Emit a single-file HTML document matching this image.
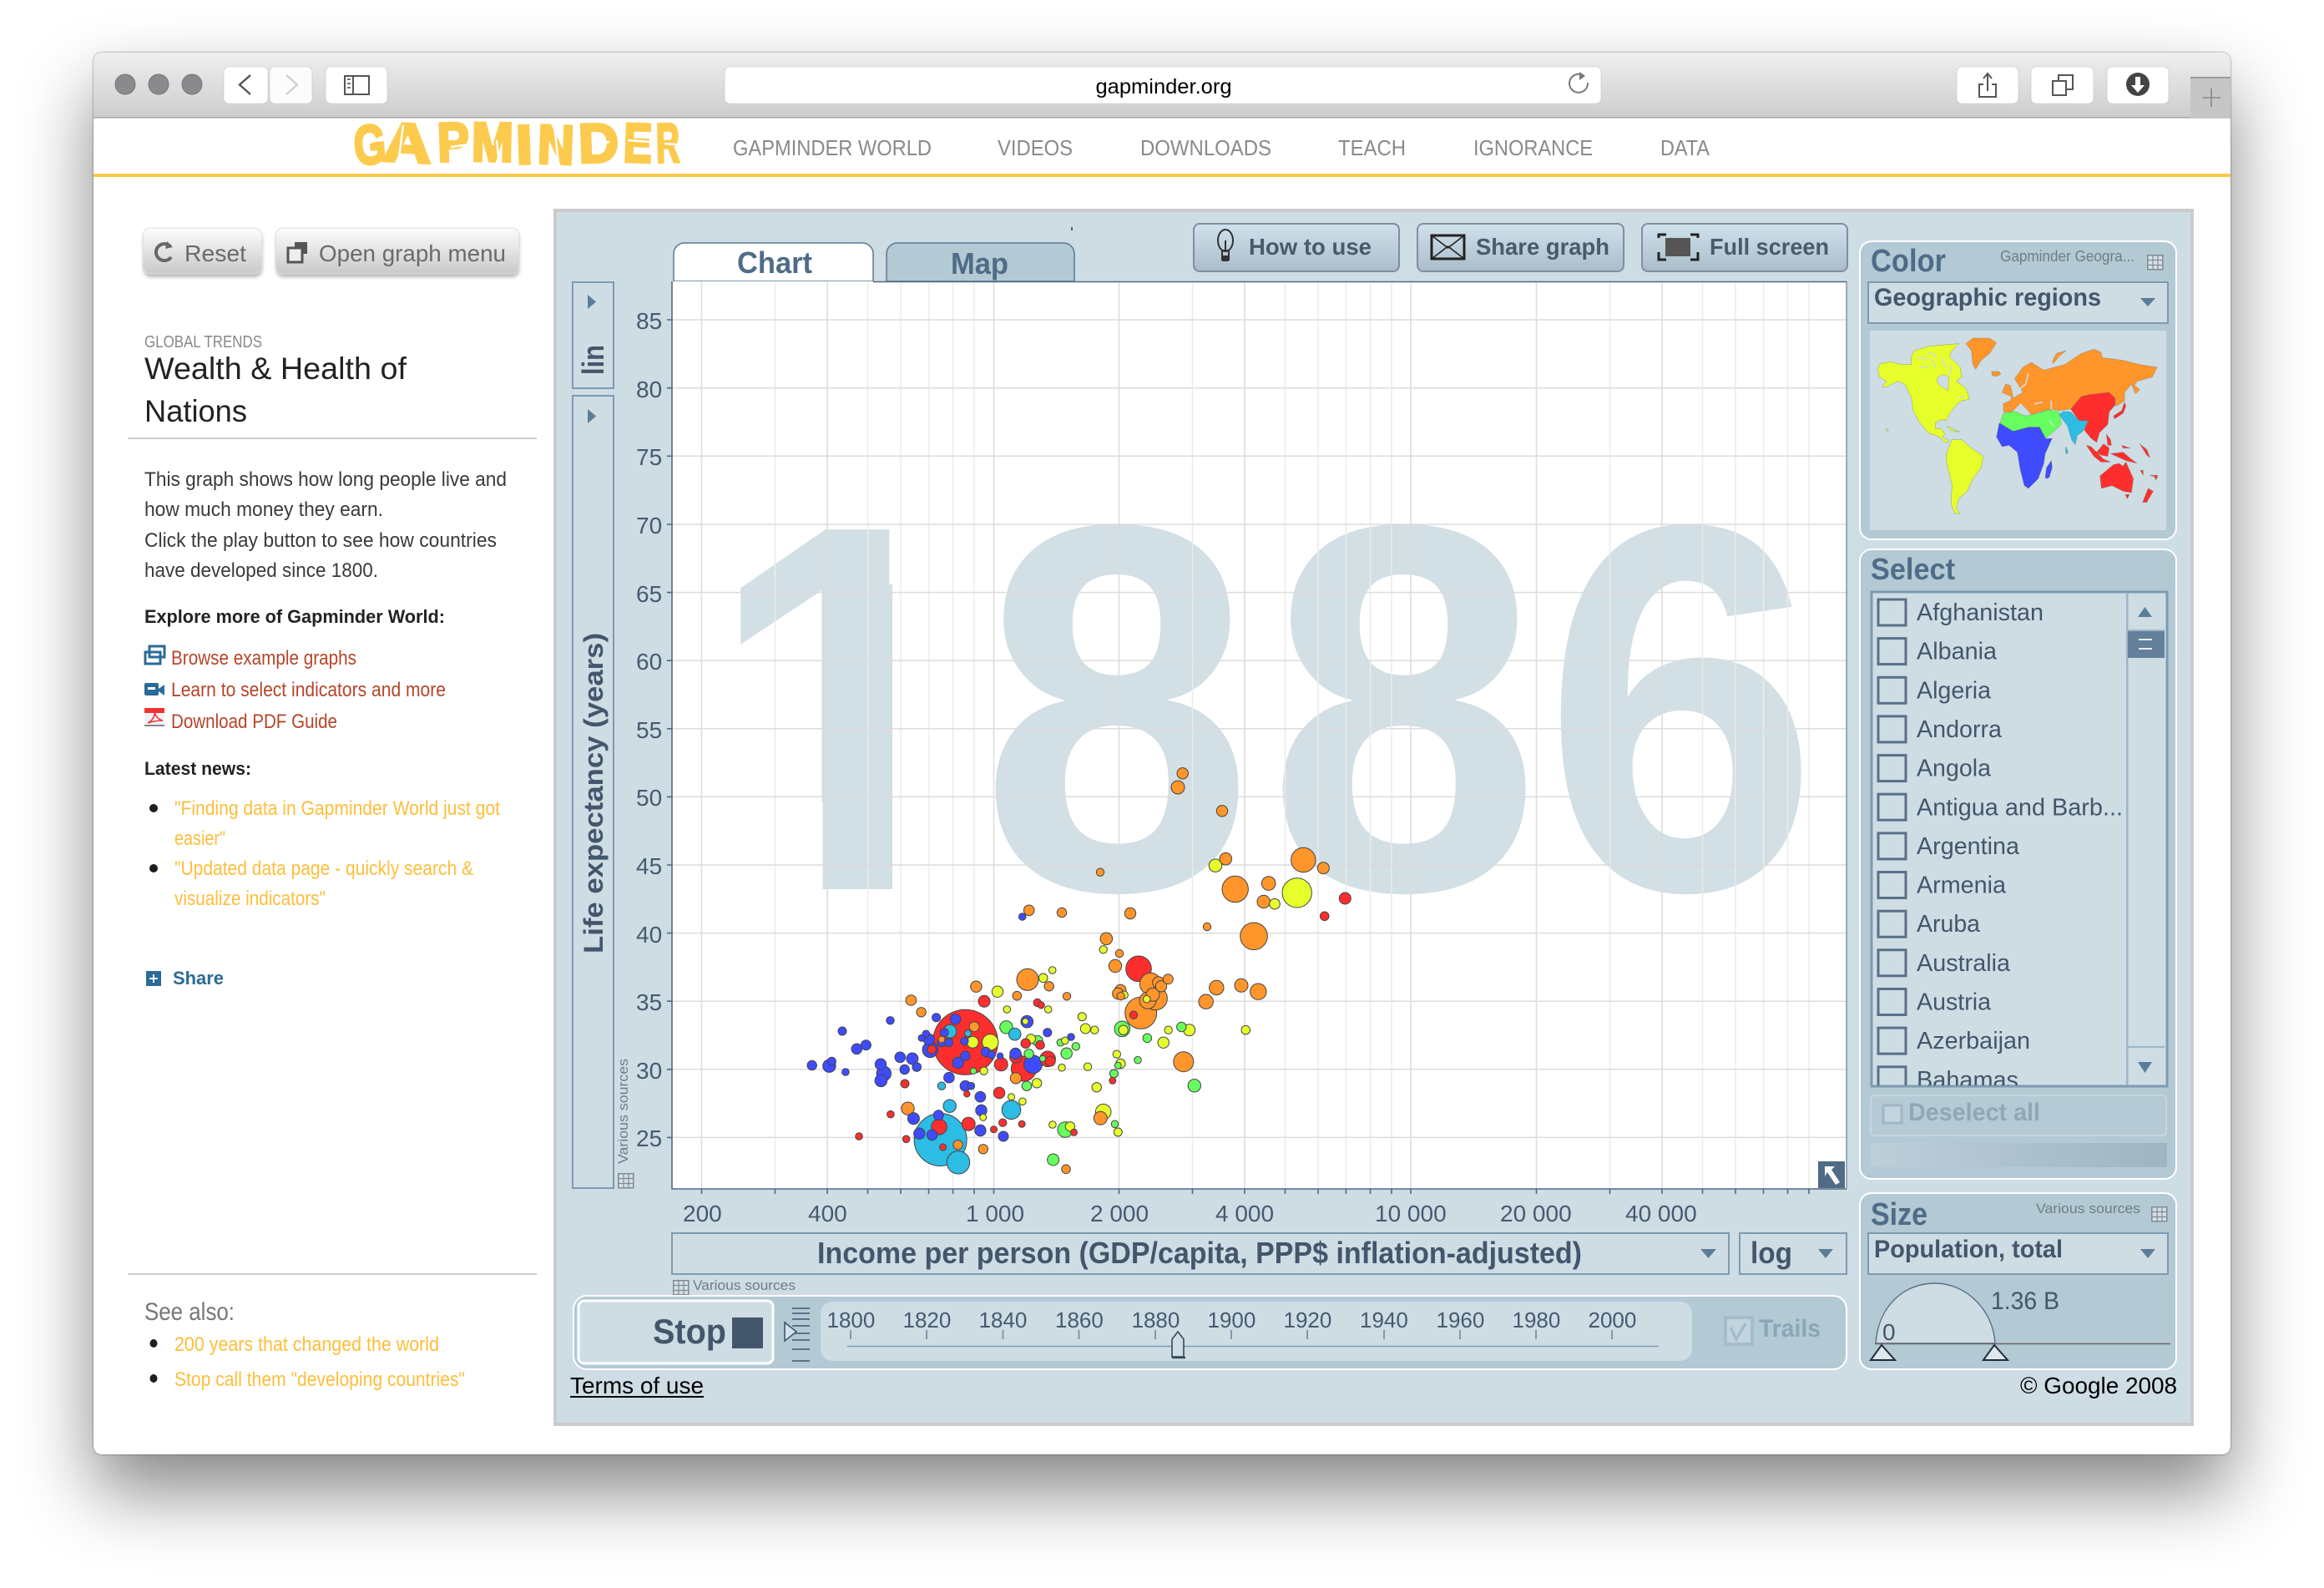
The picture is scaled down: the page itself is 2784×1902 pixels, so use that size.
<!DOCTYPE html>
<html lang="en"><head><meta charset="utf-8"><title>Gapminder</title>
<style>
html,body{margin:0;padding:0;background:#fff;width:2784px;height:1902px;overflow:hidden}
#win{position:absolute;left:112px;top:63px;width:2560px;height:1679px;border-radius:10px;background:#fff;box-shadow:0 44px 88px rgba(0,0,0,.48),0 0 2px rgba(0,0,0,.55)}
svg{position:absolute;left:0;top:0}
text{font-family:"Liberation Sans",sans-serif;fill:#43566b}
.bd{font-weight:700}
.lt{fill:#3a3a3a}
.lk{fill:#b5452a}
.nw{fill:#fdbe3b}
.nv{fill:#8a8a8a}
.sm{fill:#6f7d88}
.ax{font-size:28px;fill:#465a70}
.tl{font-size:26px;fill:#465a70}
.it{font-size:29px;fill:#43566b}
.hd{fill:#4f6c87;font-weight:700}
.btx{fill:#475b6b;font-weight:700;font-size:28px}
circle{stroke:#444;stroke-width:1}
.o{fill:#ff952b}.y{fill:#e6ff2a}.r{fill:#ff2e2e}.b{fill:#3f4bff}.c{fill:#2cbce4}.g{fill:#66ff5e}
.box{fill:#cedce4;stroke:#7d9bb0;stroke-width:2}
.pn{fill:#b3c9d4;stroke:#fff;stroke-width:2}
.cb{fill:none;stroke:#5a7088;stroke-width:3}
.ar{fill:#5c7d97}
.map path{stroke:#5d6a50;stroke-width:1.5;stroke-opacity:.6}
.yr{fill:#d2dfe5;font-weight:700;font-size:620px}
.lg{fill:#fccb4e;font-weight:700;font-size:66px;stroke:#fccb4e;stroke-width:3.500}
</style></head><body>
<div id="win"></div>
<svg width="2784" height="1902" viewBox="0 0 2784 1902" xmlns="http://www.w3.org/2000/svg">
<defs>
<linearGradient id="tb" x1="0" y1="0" x2="0" y2="1"><stop offset="0" stop-color="#efefef"/><stop offset="1" stop-color="#cdcdcd"/></linearGradient>
<linearGradient id="gb" x1="0" y1="0" x2="0" y2="1"><stop offset="0" stop-color="#fdfdfd"/><stop offset="1" stop-color="#c9c9c9"/></linearGradient>
<linearGradient id="fb" x1="0" y1="0" x2="0" y2="1"><stop offset="0" stop-color="#d0e1ec"/><stop offset="1" stop-color="#a9bdc9"/></linearGradient>
<linearGradient id="pg" x1="0" y1="0" x2="1" y2="0"><stop offset="0" stop-color="#bccfda"/><stop offset="1" stop-color="#9fb4c1"/></linearGradient>
<filter id="sf" x="-10%" y="-20%" width="120%" height="150%"><feGaussianBlur stdDeviation="2"/></filter>
<clipPath id="lc"><rect x="2244" y="711" width="303" height="589"/></clipPath>
<clipPath id="tc"><path d="M112 141V73a10 10 0 0 1 10-10H2662a10 10 0 0 1 10 10V141Z"/></clipPath>
<g id="tbl"><rect x=".75" y=".75" width="18" height="17" fill="#d5e0e6" stroke="#7f8a92" stroke-width="1.5"/><path d="M7 .75V18M13 .75V18M.75 6.5H19M.75 12.5H19" stroke="#7f8a92" stroke-width="1.2" fill="none"/></g>
</defs>

<!-- browser chrome -->
<rect x="112" y="63" width="2560" height="78" fill="url(#tb)" clip-path="url(#tc)"/>
<rect x="112" y="140" width="2560" height="1.6" fill="#a8a8a8"/>
<circle cx="150" cy="101" r="12" fill="#8a898e" style="stroke:#77767a"/>
<circle cx="190" cy="101" r="12" fill="#8a898e" style="stroke:#77767a"/>
<circle cx="230" cy="101" r="12" fill="#8a898e" style="stroke:#77767a"/>
<g fill="#fff" stroke="#c2c2c2" stroke-width=".6">
<rect x="268" y="80" width="53" height="44" rx="6"/>
<rect x="323" y="80" width="51" height="44" rx="6" fill="#fcfcfc"/>
<rect x="390" y="80" width="74" height="44" rx="6"/>
<rect x="868" y="80" width="1050" height="44" rx="6"/>
<rect x="2344" y="80" width="74" height="44" rx="6"/>
<rect x="2433" y="80" width="75" height="44" rx="6"/>
<rect x="2524" y="80" width="74" height="44" rx="6"/>
</g>
<path d="M300 90 287 101.5 300 113" fill="none" stroke="#555" stroke-width="2.4"/>
<path d="M343 90 356 101.5 343 113" fill="none" stroke="#d0d0d0" stroke-width="2.4"/>
<g fill="none" stroke="#555" stroke-width="2"><rect x="413" y="91" width="29" height="22"/><path d="M423 91V113"/></g>
<path d="M416 95h4M416 100h4M416 105h4" stroke="#777" stroke-width="2"/>
<text x="1312.500" y="112" font-size="25" style="fill:#000" textLength="163" lengthAdjust="spacingAndGlyphs">gapminder.org</text>
<path d="M1896 90a11 11 0 1 0 6 9" fill="none" stroke="#777" stroke-width="2"/><path d="M1892 86l7 5-7 5z" fill="#777"/>
<g fill="none" stroke="#555" stroke-width="2"><path d="M2376 100h-5v15h20v-15h-5" transform="translate(0 1)"/><path d="M2381 109V89M2376 94l5-6 5 6"/>
<rect x="2459" y="97" width="16" height="17"/><path d="M2466 97V90h17v17h-8"/></g>
<circle cx="2561" cy="101" r="14" fill="#444" style="stroke:none"/><path d="M2558 92h6v10h5l-8 9-8-9h5z" fill="#fff"/>
<rect x="2624" y="92" width="48" height="49" fill="#c6c6c6"/><rect x="2624" y="92" width="48" height="2" fill="#9a9a9a"/><path d="M2649 106v22M2638 117h22" stroke="#888" stroke-width="1.6"/>

<!-- site header: logo letters individually tilted -->
<text class="lg" transform="rotate(-4 442 173)" x="424" y="196" textLength="38" lengthAdjust="spacingAndGlyphs">G</text>
<text class="lg" transform="rotate(3 489 173)" x="459" y="194" textLength="58" lengthAdjust="spacingAndGlyphs">A</text>
<text class="lg" transform="rotate(-2 543 173)" x="524" y="193" textLength="38" lengthAdjust="spacingAndGlyphs">P</text>
<text class="lg" transform="rotate(1 590 173)" x="565" y="193" textLength="50" lengthAdjust="spacingAndGlyphs">M</text>
<text class="lg" transform="rotate(-2 628 173)" x="618" y="196" textLength="20" lengthAdjust="spacingAndGlyphs">I</text>
<text class="lg" transform="rotate(2 666 173)" x="644" y="196" textLength="44" lengthAdjust="spacingAndGlyphs">N</text>
<text class="lg" transform="rotate(-2 717 173)" x="693" y="194" textLength="48" lengthAdjust="spacingAndGlyphs">D</text>
<text class="lg" transform="rotate(2 764 173)" x="747" y="194" textLength="34" lengthAdjust="spacingAndGlyphs">E</text>
<text class="lg" transform="rotate(-1 801 173)" x="786" y="194" textLength="28" lengthAdjust="spacingAndGlyphs">R</text>
<path d="M440 172l22-8M483 150l-6 46M540 176l24-3M585 150l6 24M598 196l-3-28M664 150l5 46M714 172l16-2M752 168l28 2M796 172l14 1" stroke="#fff" stroke-width="2.500" fill="none"/>
<rect x="112" y="208" width="2560" height="4" fill="#fec846"/>
<g font-size="26">
<text class="nv" x="878" y="186" textLength="238" lengthAdjust="spacingAndGlyphs">GAPMINDER WORLD</text>
<text class="nv" x="1195" y="186" textLength="90" lengthAdjust="spacingAndGlyphs">VIDEOS</text>
<text class="nv" x="1366" y="186" textLength="157" lengthAdjust="spacingAndGlyphs">DOWNLOADS</text>
<text class="nv" x="1603" y="186" textLength="81" lengthAdjust="spacingAndGlyphs">TEACH</text>
<text class="nv" x="1765" y="186" textLength="143" lengthAdjust="spacingAndGlyphs">IGNORANCE</text>
<text class="nv" x="1989" y="186" textLength="59" lengthAdjust="spacingAndGlyphs">DATA</text>
</g>

<!-- left column -->
<rect x="172" y="277" width="142" height="55" rx="9" fill="#888" filter="url(#sf)" opacity=".6"/>
<rect x="331" y="277" width="291" height="55" rx="9" fill="#888" filter="url(#sf)" opacity=".6"/>
<rect x="171" y="273" width="143" height="55" rx="9" fill="url(#gb)" stroke="#ddd"/>
<rect x="330" y="273" width="292" height="55" rx="9" fill="url(#gb)" stroke="#ddd"/>
<path d="M204 295a10 10 0 1 0 1 13" fill="none" stroke="#666" stroke-width="4"/><path d="M200 289l7 7-9 2z" fill="#666"/>
<text x="221" y="313" font-size="28" style="fill:#6a6a6a" textLength="74" lengthAdjust="spacingAndGlyphs">Reset</text>
<rect x="353" y="290" width="15" height="14" fill="#555"/><rect x="345" y="297" width="17" height="17" fill="#eee" stroke="#555" stroke-width="3"/>
<text x="382" y="313" font-size="28" style="fill:#6a6a6a" textLength="224" lengthAdjust="spacingAndGlyphs">Open graph menu</text>

<text x="173" y="416" font-size="20" style="fill:#888" textLength="141" lengthAdjust="spacingAndGlyphs">GLOBAL TRENDS</text>
<text x="173" y="454" font-size="37" style="fill:#222" textLength="314" lengthAdjust="spacingAndGlyphs">Wealth &amp; Health of</text>
<text x="173" y="505" font-size="37" style="fill:#222" textLength="123" lengthAdjust="spacingAndGlyphs">Nations</text>
<rect x="153" y="524" width="490" height="2" fill="#ccc"/>
<g font-size="24">
<text class="lt" x="173" y="582" textLength="434" lengthAdjust="spacingAndGlyphs">This graph shows how long people live and</text>
<text class="lt" x="173" y="618" textLength="286" lengthAdjust="spacingAndGlyphs">how much money they earn.</text>
<text class="lt" x="173" y="655" textLength="422" lengthAdjust="spacingAndGlyphs">Click the play button to see how countries</text>
<text class="lt" x="173" y="691" textLength="280" lengthAdjust="spacingAndGlyphs">have developed since 1800.</text>
<text class="lk" x="205" y="796" textLength="222" lengthAdjust="spacingAndGlyphs">Browse example graphs</text>
<text class="lk" x="205" y="834" textLength="329" lengthAdjust="spacingAndGlyphs">Learn to select indicators and more</text>
<text class="lk" x="205" y="872" textLength="199" lengthAdjust="spacingAndGlyphs">Download PDF Guide</text>
<text class="nw" x="209" y="976" textLength="390" lengthAdjust="spacingAndGlyphs">"Finding data in Gapminder World just got</text>
<text class="nw" x="209" y="1012" textLength="61" lengthAdjust="spacingAndGlyphs">easier"</text>
<text class="nw" x="209" y="1048" textLength="358" lengthAdjust="spacingAndGlyphs">"Updated data page - quickly search &amp;</text>
<text class="nw" x="209" y="1084" textLength="181" lengthAdjust="spacingAndGlyphs">visualize indicators"</text>
<text class="nw" x="209" y="1618" textLength="317" lengthAdjust="spacingAndGlyphs">200 years that changed the world</text>
<text class="nw" x="209" y="1660" textLength="348" lengthAdjust="spacingAndGlyphs">Stop call them "developing countries"</text>
</g>
<text x="173" y="746" font-size="22" class="bd" style="fill:#222" textLength="360" lengthAdjust="spacingAndGlyphs">Explore more of Gapminder World:</text>
<text x="173" y="928" font-size="22" class="bd" style="fill:#222" textLength="128" lengthAdjust="spacingAndGlyphs">Latest news:</text>
<g fill="#1e1e1e"><ellipse cx="184" cy="968" rx="5" ry="5"/><ellipse cx="184" cy="1040" rx="5" ry="5"/><ellipse cx="184" cy="1609" rx="4.5" ry="5"/><ellipse cx="184" cy="1651" rx="4.5" ry="5"/></g>
<!-- link icons -->
<g fill="none" stroke="#2a6b98" stroke-width="3"><rect x="179" y="774" width="18" height="13" fill="#fff"/><rect x="174" y="781" width="18" height="14" /></g>
<rect x="173" y="818" width="17" height="15" rx="2" fill="#2a6b98"/><path d="M190 825l7-5v13l-7-5z" fill="#2a6b98"/><rect x="177" y="823" width="9" height="3" fill="#fff"/>
<rect x="173" y="848" width="24" height="22" fill="#f3f3f3"/><rect x="173" y="848" width="24" height="6" fill="#e33"/><path d="M177 866c6-3 9-9 8-14 1 6 5 10 10 11-6 0-12 1-18 3z" fill="none" stroke="#e33" stroke-width="1.6"/><rect x="173" y="868" width="24" height="2" fill="#888"/>
<rect x="175" y="1163" width="18" height="18" fill="#2a6b98"/><path d="M179 1172h10M184 1167v10" stroke="#fff" stroke-width="2"/>
<text x="207" y="1179" font-size="22" class="bd" style="fill:#2a6b98" textLength="61" lengthAdjust="spacingAndGlyphs">Share</text>
<rect x="153" y="1525" width="490" height="2" fill="#ccc"/>
<text x="173" y="1581" font-size="30" style="fill:#777" textLength="108" lengthAdjust="spacingAndGlyphs">See also:</text>

<!-- flash panel -->
<rect x="665" y="252" width="1961" height="1454" fill="#cedce4" stroke="#cbcbcb" stroke-width="4"/>

<!-- tabs -->
<path d="M807 337V304a13 13 0 0 1 13-13H1033a13 13 0 0 1 13 13V337Z" fill="#fff" stroke="#5a7891" stroke-width="1.5"/>
<path d="M1062 337V304a13 13 0 0 1 13-13H1274a13 13 0 0 1 13 13V337Z" fill="#b3c9d4" stroke="#5a7891" stroke-width="1.5"/>
<text x="883" y="327" font-size="36" class="hd" textLength="90" lengthAdjust="spacingAndGlyphs">Chart</text>
<text x="1139" y="328" font-size="36" class="hd" textLength="69" lengthAdjust="spacingAndGlyphs">Map</text>
<rect x="1283" y="272" width="2" height="4" fill="#4d5f70"/>

<!-- top buttons -->
<g stroke="#7e909c" stroke-width="2">
<rect x="1430" y="268" width="246" height="57" rx="7" fill="url(#fb)"/>
<rect x="1698" y="268" width="247" height="57" rx="7" fill="url(#fb)"/>
<rect x="1967" y="268" width="246" height="57" rx="7" fill="url(#fb)"/>
</g>
<g fill="none" stroke="#333" stroke-width="2"><ellipse cx="1468" cy="288" rx="9" ry="13"/><path d="M1464 300h8v11h-8zM1468 288v12"/></g><rect x="1464" y="306" width="8" height="7" fill="#333"/>
<g fill="none" stroke="#222" stroke-width="3"><rect x="1715" y="282" width="39" height="28"/><path d="M1715 282l19.500 15 19.500-15M1715 310l19.500-15 19.500 15" stroke-width="1.6"/></g>
<path d="M1987 285v-4h9M2025 281h9v4M1987 302v9h9M2034 302v9h-9" fill="none" stroke="#222" stroke-width="3"/><rect x="1995" y="285" width="30" height="22" fill="#555"/>
<text class="btx" x="1496" y="305" textLength="147" lengthAdjust="spacingAndGlyphs">How to use</text>
<text class="btx" x="1768" y="305" textLength="160" lengthAdjust="spacingAndGlyphs">Share graph</text>
<text class="btx" x="2048" y="305" textLength="143" lengthAdjust="spacingAndGlyphs">Full screen</text>

<!-- plot -->
<rect x="805" y="337" width="1407" height="1087" fill="#fff"/>
<text class="yr" transform="translate(847 1065) scale(.95 1.01)" x="0" y="0">1</text>
<rect x="860" y="960" width="140" height="117" fill="#fff"/>
<rect x="1060" y="960" width="104" height="117" fill="#fff"/>
<rect x="985.500" y="700" width="83.500" height="365" fill="#d2dfe5"/>
<text class="yr" transform="translate(1174 1065) scale(.95 1.01)" x="0" y="0">8</text>
<text class="yr" transform="translate(1518 1065) scale(.95 1.01)" x="0" y="0">8</text>
<text class="yr" transform="translate(1848 1065) scale(.96 1.01)" x="0" y="0">6</text>
<path d="M928.500 337V1424M1039.500 337V1424M1079 337V1424M1112.500 337V1424M1141.500 337V1424M1167 337V1424M1428.500 337V1424M1539.500 337V1424M1579 337V1424M1612.500 337V1424M1641.500 337V1424M1667 337V1424M1928.500 337V1424M2039.500 337V1424M2079 337V1424M2112.500 337V1424M2141.500 337V1424M2167 337V1424" stroke="#ececec" stroke-width="1.5" fill="none"/>
<path d="M840.500 337V1424M991 337V1424M1190.500 337V1424M1340.500 337V1424M1491 337V1424M1690 337V1424M1840.500 337V1424M1991 337V1424M805 383H2212M805 464.700H2212M805 546.300H2212M805 628H2212M805 709.600H2212M805 791.200H2212M805 872.800H2212M805 954.400H2212M805 1036H2212M805 1117.600H2212M805 1199.200H2212M805 1280.800H2212M805 1362.400H2212" stroke="#dcdcdc" stroke-width="1.5" fill="none"/>

<!-- bubbles -->
<g>
<circle class="r" cx="1156.400" cy="1248.300" r="39"/>
<circle class="c" cx="1126.600" cy="1365" r="31.500"/>
<circle class="o" cx="1366.700" cy="1213.300" r="19"/>
<circle class="y" cx="1553.700" cy="1069.300" r="17.700"/>
<circle class="o" cx="1502" cy="1121.300" r="16.300"/>
<circle class="o" cx="1479.700" cy="1065" r="15.700"/>
<circle class="r" cx="1364" cy="1160.300" r="15.300"/>
<circle class="r" cx="1226.400" cy="1280" r="15"/>
<circle class="o" cx="1561.300" cy="1030" r="14.700"/>
<circle class="o" cx="1384.300" cy="1195.700" r="14"/>
<circle class="c" cx="1148" cy="1392.300" r="13.700"/>
<circle class="o" cx="1378.300" cy="1178.300" r="13"/>
<circle class="o" cx="1231" cy="1173.300" r="13"/>
<circle class="o" cx="1417.800" cy="1271.700" r="12"/>
<circle class="c" cx="1211.500" cy="1329.300" r="11.300"/>
<circle class="b" cx="1237.500" cy="1274.700" r="11"/>
<circle class="o" cx="1375" cy="1198.300" r="10"/>
<circle class="o" cx="1507.300" cy="1187.700" r="9.700"/>
<circle class="y" cx="1186.300" cy="1248.300" r="9.700"/>
<circle class="y" cx="1321.700" cy="1331.700" r="9.300"/>
<circle class="g" cx="1276.200" cy="1353" r="9.300"/>
<circle class="g" cx="1344.300" cy="1232.300" r="9.300"/>
<circle class="r" cx="1125" cy="1349.700" r="9.300"/>
<circle class="r" cx="1255.100" cy="1268.300" r="9.300"/>
<circle class="b" cx="1114.300" cy="1257.300" r="9.300"/>
<circle class="o" cx="1457.300" cy="1183" r="8.700"/>
<circle class="o" cx="1444.700" cy="1199.700" r="8.700"/>
<circle class="b" cx="1058.800" cy="1285.700" r="8.700"/>
<circle class="o" cx="1519.700" cy="1058" r="8.300"/>
<circle class="o" cx="1411" cy="943" r="8"/>
<circle class="o" cx="1381" cy="1191.300" r="8"/>
<circle class="o" cx="1487" cy="1180.300" r="8"/>
<circle class="o" cx="1318.300" cy="1339.300" r="8"/>
<circle class="r" cx="1160.200" cy="1346.300" r="8"/>
<circle class="r" cx="1199.300" cy="1274.700" r="8"/>
<circle class="c" cx="1138" cy="1235.300" r="8"/>
<circle class="y" cx="1456" cy="1036.700" r="7.700"/>
<circle class="o" cx="1513.700" cy="1080" r="7.700"/>
<circle class="o" cx="1336" cy="1157" r="7.700"/>
<circle class="o" cx="1087.500" cy="1327.700" r="7.700"/>
<circle class="c" cx="1137.700" cy="1324.700" r="7.700"/>
<circle class="g" cx="1205.400" cy="1230.300" r="7.700"/>
<circle class="g" cx="1430.800" cy="1300.300" r="7.700"/>
<circle class="b" cx="993.400" cy="1276.700" r="7.700"/>
<circle class="o" cx="1468.300" cy="1028.700" r="7.300"/>
<circle class="o" cx="1325.300" cy="1124.300" r="7.300"/>
<circle class="b" cx="1230.300" cy="1223.700" r="7.300"/>
<circle class="c" cx="1215.700" cy="1238.700" r="7.300"/>
<circle class="b" cx="1055.400" cy="1294.300" r="7.300"/>
<circle class="r" cx="1216.900" cy="1266" r="7.300"/>
<circle class="o" cx="1585.300" cy="1039.700" r="7"/>
<circle class="r" cx="1611.300" cy="1076" r="7"/>
<circle class="o" cx="1387.700" cy="1176.700" r="7"/>
<circle class="y" cx="1424.700" cy="1233.700" r="7"/>
<circle class="y" cx="1165.200" cy="1248.300" r="7"/>
<circle class="r" cx="1179" cy="1199.300" r="7"/>
<circle class="b" cx="1092.900" cy="1268" r="7"/>
<circle class="b" cx="1094.400" cy="1339.700" r="7"/>
<circle class="g" cx="1261.600" cy="1389" r="7"/>
<circle class="o" cx="1416.700" cy="926.300" r="6.700"/>
<circle class="o" cx="1464" cy="971.300" r="6.700"/>
<circle class="o" cx="1354" cy="1094" r="6.700"/>
<circle class="o" cx="1391" cy="1181.300" r="6.700"/>
<circle class="o" cx="1342.300" cy="1186" r="6.700"/>
<circle class="o" cx="1339.300" cy="1190" r="6.700"/>
<circle class="o" cx="1169.400" cy="1181.700" r="6.700"/>
<circle class="y" cx="1195" cy="1187.700" r="6.700"/>
<circle class="y" cx="1393.700" cy="1248.700" r="6.700"/>
<circle class="b" cx="1055" cy="1274.700" r="6.700"/>
<circle class="b" cx="1175.500" cy="1330" r="6.700"/>
<circle class="b" cx="1174.400" cy="1354" r="6.700"/>
<circle class="b" cx="1101.300" cy="1357.700" r="6.700"/>
<circle class="b" cx="1112.800" cy="1245" r="6.700"/>
<circle class="b" cx="1147.600" cy="1273" r="6.700"/>
<circle class="r" cx="1197" cy="1309" r="6.700"/>
<circle class="g" cx="1277.700" cy="1261.700" r="6.700"/>
<circle class="b" cx="1216.500" cy="1262" r="6.700"/>
<circle class="o" cx="1216.900" cy="1291.300" r="6.700"/>
<circle class="o" cx="1232.700" cy="1090.300" r="6.300"/>
<circle class="y" cx="1527" cy="1082.700" r="6.300"/>
<circle class="b" cx="1026.300" cy="1256.300" r="6.300"/>
<circle class="b" cx="1078.300" cy="1266.300" r="6.300"/>
<circle class="b" cx="972.700" cy="1276" r="5.700"/>
<circle class="b" cx="1136.900" cy="1290.700" r="6.300"/>
<circle class="b" cx="1156.400" cy="1300.700" r="6.300"/>
<circle class="b" cx="1174.400" cy="1313.700" r="6.300"/>
<circle class="b" cx="1116.600" cy="1359.300" r="6.300"/>
<circle class="b" cx="1144.500" cy="1220.700" r="6.300"/>
<circle class="g" cx="1242.900" cy="1246.700" r="6.300"/>
<circle class="o" cx="1091.400" cy="1198" r="6.300"/>
<circle class="o" cx="1399.300" cy="1172.700" r="6"/>
<circle class="y" cx="1300.300" cy="1232" r="6"/>
<circle class="o" cx="1167.100" cy="1229.700" r="6"/>
<circle class="b" cx="1037.400" cy="1251.700" r="6"/>
<circle class="b" cx="1124.300" cy="1335.700" r="6"/>
<circle class="b" cx="1202" cy="1361" r="6"/>
<circle class="r" cx="1258.200" cy="1271" r="6"/>
<circle class="o" cx="1272" cy="1093" r="5.700"/>
<circle class="o" cx="1256.700" cy="1181.300" r="5.700"/>
<circle class="o" cx="1103.600" cy="1212.300" r="5.700"/>
<circle class="o" cx="1147.600" cy="1371.300" r="5.700"/>
<circle class="o" cx="1177.800" cy="1376.300" r="5.700"/>
<circle class="y" cx="1345.700" cy="1233.700" r="5.700"/>
<circle class="g" cx="1415.300" cy="1230" r="5.700"/>
<circle class="y" cx="1342.400" cy="1274" r="5.700"/>
<circle class="y" cx="1313.700" cy="1302.300" r="5.700"/>
<circle class="y" cx="1281.900" cy="1349.300" r="5.700"/>
<circle class="g" cx="1232.600" cy="1262.300" r="5.700"/>
<circle class="y" cx="1242.100" cy="1297.300" r="5.700"/>
<circle class="g" cx="1229.900" cy="1300.700" r="5.700"/>
<circle class="y" cx="1234.900" cy="1244.300" r="5.700"/>
<circle class="r" cx="1228.700" cy="1249.700" r="5.700"/>
<circle class="b" cx="1083.700" cy="1281" r="5.700"/>
<circle class="b" cx="1180.900" cy="1260" r="5.700"/>
<circle class="b" cx="1156.400" cy="1264.700" r="5.700"/>
<circle class="y" cx="1249.700" cy="1171.300" r="5.300"/>
<circle class="o" cx="1218.300" cy="1192.700" r="5.300"/>
<circle class="r" cx="1586.700" cy="1097.300" r="5.300"/>
<circle class="y" cx="1492.300" cy="1233.700" r="5.300"/>
<circle class="g" cx="1374.300" cy="1243.300" r="5.300"/>
<circle class="b" cx="1098.200" cy="1278" r="5.300"/>
<circle class="r" cx="1246" cy="1251.700" r="5.300"/>
<circle class="r" cx="1116.200" cy="1257" r="5.300"/>
<circle class="o" cx="1277" cy="1400.300" r="5.300"/>
<circle class="y" cx="1296.300" cy="1217.700" r="5"/>
<circle class="b" cx="1121.600" cy="1218.700" r="5"/>
<circle class="b" cx="1009" cy="1235" r="5"/>
<circle class="b" cx="996.400" cy="1271.300" r="5"/>
<circle class="r" cx="1084" cy="1298" r="5"/>
<circle class="b" cx="1131.200" cy="1236.700" r="5"/>
<circle class="b" cx="1136.500" cy="1248.700" r="5"/>
<circle class="b" cx="1127.700" cy="1248.700" r="5"/>
<circle class="b" cx="1254.800" cy="1236.700" r="5"/>
<circle class="g" cx="1334.400" cy="1286" r="5"/>
<circle class="y" cx="1339.300" cy="1356" r="5"/>
<circle class="o" cx="1318" cy="1044.700" r="4.700"/>
<circle class="y" cx="1321.700" cy="1137.300" r="4.700"/>
<circle class="o" cx="1446" cy="1110" r="4.700"/>
<circle class="o" cx="1341" cy="1142" r="4.700"/>
<circle class="y" cx="1346.700" cy="1191.700" r="4.700"/>
<circle class="o" cx="1342.700" cy="1193" r="4.700"/>
<circle class="r" cx="1358" cy="1215.700" r="4.700"/>
<circle class="o" cx="1278" cy="1193.300" r="4.700"/>
<circle class="r" cx="1242.700" cy="1201" r="4.700"/>
<circle class="y" cx="1311.300" cy="1233.700" r="4.700"/>
<circle class="y" cx="1399.700" cy="1233.700" r="4.700"/>
<circle class="b" cx="1066.500" cy="1222.300" r="4.700"/>
<circle class="c" cx="1128" cy="1300.700" r="4.700"/>
<circle class="b" cx="1155.300" cy="1247" r="4.700"/>
<circle class="b" cx="1187.800" cy="1263.300" r="4.700"/>
<circle class="y" cx="1178.600" cy="1282.700" r="4.700"/>
<circle class="r" cx="1201.200" cy="1344.700" r="4.700"/>
<circle class="g" cx="1288.800" cy="1253.300" r="4.700"/>
<circle class="y" cx="1303" cy="1277.700" r="4.700"/>
<circle class="y" cx="1337.800" cy="1262.700" r="4.700"/>
<circle class="b" cx="1224.700" cy="1098" r="4.300"/>
<circle class="y" cx="1260.700" cy="1162" r="4.300"/>
<circle class="y" cx="1373.700" cy="1196.700" r="4.300"/>
<circle class="y" cx="1255.700" cy="1209" r="4.300"/>
<circle class="y" cx="1206.300" cy="1209" r="4.300"/>
<circle class="b" cx="1012.900" cy="1284" r="4.300"/>
<circle class="b" cx="1163.300" cy="1300.700" r="4.300"/>
<circle class="y" cx="1224.900" cy="1319.300" r="4.300"/>
<circle class="r" cx="1066.900" cy="1334.700" r="4.300"/>
<circle class="r" cx="1029" cy="1361" r="4.300"/>
<circle class="r" cx="1085.600" cy="1364.300" r="4.300"/>
<circle class="b" cx="1109.300" cy="1238.300" r="4.300"/>
<circle class="g" cx="1270.400" cy="1248.700" r="4.300"/>
<circle class="y" cx="1275.800" cy="1246.300" r="4.300"/>
<circle class="b" cx="1283" cy="1242" r="4.300"/>
<circle class="y" cx="1272" cy="1278.700" r="4.300"/>
<circle class="g" cx="1335.500" cy="1346.300" r="4.300"/>
<circle class="y" cx="1260.900" cy="1347" r="4.300"/>
<circle class="g" cx="1363" cy="1269.700" r="4.300"/>
<circle class="r" cx="1247.300" cy="1204" r="4"/>
<circle class="y" cx="1211.500" cy="1313.700" r="4"/>
<circle class="y" cx="1177.800" cy="1338.300" r="4"/>
<circle class="r" cx="1129.600" cy="1374" r="4"/>
<circle class="r" cx="1190.500" cy="1352.700" r="4"/>
<circle class="r" cx="1224.100" cy="1346.300" r="4"/>
<circle class="o" cx="1128" cy="1245" r="4"/>
<circle class="b" cx="1104" cy="1243.300" r="4"/>
<circle class="c" cx="1159.500" cy="1237.700" r="4"/>
<circle class="g" cx="1339.300" cy="1276.300" r="4"/>
<circle class="r" cx="1332.800" cy="1294.300" r="4"/>
<circle class="r" cx="1286.500" cy="1356.300" r="4"/>
<circle class="y" cx="1228.300" cy="1223.300" r="3.700"/>
<circle class="r" cx="1158.300" cy="1310.300" r="3.700"/>
<circle class="b" cx="1198.100" cy="1264.700" r="3.700"/>
<circle class="g" cx="1166" cy="1282.700" r="3.700"/>
<circle class="g" cx="1249" cy="1268" r="3.700"/>
</g>

<!-- axes -->
<path d="M805 337V1424H2212" fill="none" stroke="#4d6a85" stroke-width="1.600"/>
<path d="M2212 337V1424" stroke="#4d6a85" stroke-width="1"/>
<path d="M1046 337.500H2212" stroke="#4d6a85" stroke-width="1.400"/>
<path d="M840.500 1424v6M928.500 1424v6M991 1424v6M1039.500 1424v6M1079 1424v6M1112.500 1424v6M1141.500 1424v6M1167 1424v6M1190.500 1424v6M1340.500 1424v6M1428.500 1424v6M1491 1424v6M1539.500 1424v6M1579 1424v6M1612.500 1424v6M1641.500 1424v6M1667 1424v6M1690 1424v6M1840.500 1424v6M1928.500 1424v6M1991 1424v6M2039.500 1424v6M2079 1424v6M2112.500 1424v6M2141.500 1424v6M2167 1424v6M799 383h6M799 464.700h6M799 546.300h6M799 628h6M799 709.600h6M799 791.200h6M799 872.800h6M799 954.400h6M799 1036h6M799 1117.600h6M799 1199.200h6M799 1280.800h6M799 1362.400h6" stroke="#4d6a85" stroke-width="1.6"/>
<g>
<text class="ax" x="762" y="394">85</text><text class="ax" x="762" y="476">80</text><text class="ax" x="762" y="557">75</text><text class="ax" x="762" y="639">70</text><text class="ax" x="762" y="721">65</text><text class="ax" x="762" y="802">60</text><text class="ax" x="762" y="884">55</text><text class="ax" x="762" y="965">50</text><text class="ax" x="762" y="1047">45</text><text class="ax" x="762" y="1129">40</text><text class="ax" x="762" y="1210">35</text><text class="ax" x="762" y="1292">30</text><text class="ax" x="762" y="1373">25</text>
<text class="ax" x="818" y="1463">200</text><text class="ax" x="968" y="1463">400</text><text class="ax" x="1157" y="1463">1 000</text><text class="ax" x="1306" y="1463">2 000</text><text class="ax" x="1456" y="1463">4 000</text><text class="ax" x="1647" y="1463">10 000</text><text class="ax" x="1797" y="1463">20 000</text><text class="ax" x="1947" y="1463">40 000</text>
</g>
<rect x="2178" y="1391" width="32" height="32" fill="#4f6b85"/><path d="M2186 1397h12l-4 4 10 15-5 3-10-15-3 5z" fill="#fff"/>

<!-- left scale boxes -->
<rect class="box" x="686" y="338" width="49" height="127"/>
<rect class="box" x="686" y="474" width="49" height="949"/>
<path class="ar" d="M704 353l10 8.500-10 8.500z"/><path class="ar" d="M704 490l10 8.500-10 8.500z"/>
<text transform="rotate(-90 723 449)" x="723" y="449" font-size="36" class="bd" textLength="36" lengthAdjust="spacingAndGlyphs">lin</text>
<text transform="rotate(-90 722 1142)" x="722" y="1142" font-size="32" class="bd" textLength="384" lengthAdjust="spacingAndGlyphs">Life expectancy (years)</text>
<text transform="rotate(-90 752 1394)" x="752" y="1394" font-size="17" class="sm" textLength="126" lengthAdjust="spacingAndGlyphs">Various sources</text>
<use href="#tbl" x="740" y="1405"/>

<!-- x dropdowns -->
<rect class="box" x="805" y="1477" width="1266" height="49"/>
<rect class="box" x="2084" y="1477" width="128" height="49"/>
<text x="979" y="1513" font-size="36" class="bd" textLength="916" lengthAdjust="spacingAndGlyphs">Income per person (GDP/capita, PPP$ inflation-adjusted)</text>
<text x="2097" y="1513" font-size="36" class="bd" textLength="50" lengthAdjust="spacingAndGlyphs">log</text>
<path class="ar" d="M2037 1496h19l-9.500 11z"/><path class="ar" d="M2178 1496h18l-9 11z"/>
<use href="#tbl" x="806" y="1533"/>
<text x="830" y="1545" font-size="17" class="sm" textLength="123" lengthAdjust="spacingAndGlyphs">Various sources</text>

<!-- timeline -->
<rect class="pn" x="687" y="1552" width="1525" height="88" rx="16"/>
<rect x="693" y="1558" width="233" height="75" rx="7" fill="#cedce4" stroke="#fff" stroke-width="3"/>
<text x="782" y="1609" font-size="42" class="bd" textLength="88" lengthAdjust="spacingAndGlyphs">Stop</text>
<rect x="877" y="1578" width="37" height="37" fill="#43566b"/>
<path d="M949 1567h21M949 1573h21M949 1580h21M949 1588h21M949 1597h21M949 1605h21M949 1616h21M949 1630h21" stroke="#3f5870" stroke-width="1.6"/>
<path d="M940 1584l14 11-14 11z" fill="#d5e2e9" stroke="#3f5870" stroke-width="1.6"/>
<rect x="983" y="1559" width="1044" height="71" rx="14" fill="#cedce4"/>
<g>
<text class="tl" x="990.500" y="1590">1800</text><text class="tl" x="1081.500" y="1590">1820</text><text class="tl" x="1172.500" y="1590">1840</text><text class="tl" x="1264" y="1590">1860</text><text class="tl" x="1355.500" y="1590">1880</text><text class="tl" x="1446.500" y="1590">1900</text><text class="tl" x="1537.500" y="1590">1920</text><text class="tl" x="1629" y="1590">1940</text><text class="tl" x="1720.500" y="1590">1960</text><text class="tl" x="1811.500" y="1590">1980</text><text class="tl" x="1902.500" y="1590">2000</text>
</g>
<path d="M1019 1593v11M1110 1593v11M1201.500 1593v11M1292.500 1593v11M1384 1593v11M1475 1593v11M1566 1593v11M1658 1593v11M1749 1593v11M1840 1593v11M1931 1593v11" stroke="#7c9ab0" stroke-width="2"/>
<path d="M1015 1612.500H1987" stroke="#7d9bb0" stroke-width="1.6"/>
<path d="M1404 1625v-21l7-9 7 9v21z" fill="#cedce4" stroke="#33475c" stroke-width="1.6"/><path d="M1404 1626h16" stroke="#33475c" stroke-width="2.400"/>
<rect x="2067" y="1578" width="32" height="32" fill="#c3d4de" stroke="#a3bdcc" stroke-width="4"/>
<path d="M2073 1590l7 14 11-19" fill="none" stroke="#a3bdcc" stroke-width="3.500"/>
<text x="2107" y="1601" font-size="30" class="bd" style="fill:#8aa6b7" textLength="74" lengthAdjust="spacingAndGlyphs">Trails</text>

<text x="683" y="1669" font-size="28" style="fill:#000" textLength="160" lengthAdjust="spacingAndGlyphs">Terms of use</text>
<rect x="683" y="1672" width="160" height="2" fill="#000"/>
<text x="2420" y="1669" font-size="28" style="fill:#000" textLength="188" lengthAdjust="spacingAndGlyphs">© Google 2008</text>

<!-- color panel -->
<rect class="pn" x="2228" y="289" width="379" height="357" rx="14"/>
<text x="2241" y="325" font-size="38" class="hd" textLength="90" lengthAdjust="spacingAndGlyphs">Color</text>
<text x="2396" y="313" font-size="18" class="sm" textLength="161" lengthAdjust="spacingAndGlyphs">Gapminder Geogra...</text>
<use href="#tbl" x="2572" y="305"/>
<rect class="box" x="2238" y="338" width="359" height="49"/>
<text x="2245" y="366" font-size="30" class="bd" textLength="272" lengthAdjust="spacingAndGlyphs">Geographic regions</text>
<path class="ar" d="M2564 357h18l-9 10z"/>
<rect x="2240" y="396" width="355" height="239" fill="#cedce4"/>
<g class="map" transform="translate(2210 280) scale(.33333)">
<path fill="#e6ff2a" d="M118 490L125 468 165 460 205 470 238 470 240 440 250 420 275 412 300 405 345 400 410 395 385 420 375 440 415 480 420 515 400 530 430 550 440 570 448 595 420 600 405 610 380 640 365 670 345 668 325 680 325 700 345 700 360 720 350 730 375 745 365 752 340 730 300 715 270 680 245 635 240 590 215 540 190 530 150 550 135 550 150 530 125 515Z"/>
<path fill="#cedce4" stroke="none" style="stroke:#6d7d4c" d="M330 520L352 505 375 515 370 565 335 540Z"/>
<path fill="none" style="stroke:#cedce4;stroke-width:5;stroke-opacity:1" d="M300 425L330 440M260 445L300 450M310 450L325 480M345 445L365 480M385 470L375 510M272 480L300 478M410 590L430 585"/>
<path fill="#e6ff2a" d="M365 790L385 740 420 740 455 770 498 800 490 840 460 880 440 925 410 950 400 985 413 1005 395 1005 382 970 385 900 365 820ZM365 690L412 712 380 706ZM148 700L157 705 153 713Z"/>
<path fill="#ff952b" d="M435 395L460 375 520 375 545 392 520 430 490 455 470 487 460 470 455 420ZM527 495L555 495 560 505 545 512 530 510ZM745 460L760 430 795 420 770 440 750 465Z"/>
<path fill="#ff952b" d="M570 640L570 610 595 600 600 585 565 570 578 540 595 545 605 590 640 570 610 520 640 480 670 462 715 490 790 470 850 430 895 415 920 425 925 445 1000 455 1060 470 1122 480 1105 515 1050 530 1040 545 1060 560 1045 575 1030 540 1005 570 1005 600 975 620 970 590 950 570 880 580 850 585 810 630 770 635 745 630 700 640 670 650 650 625 630 610 600 640Z"/>
<path fill="none" style="stroke:#cedce4;stroke-width:5;stroke-opacity:1" d="M660 500L650 540 625 560M680 612L710 605M742 600L742 630M630 610L650 635"/>
<path fill="#66ff5e" d="M558 680L570 645 610 638 650 655 695 645 730 632 770 640 778 685 745 715 722 735 700 695 660 695 605 710Z"/>
<path fill="none" style="stroke:#cedce4;stroke-width:4;stroke-opacity:1" d="M735 670L750 690"/>
<path fill="#3f4bff" d="M545 730L555 680 605 710 660 695 700 695 722 737 745 735 720 790 715 825 695 880 660 915 645 905 630 845 620 785 590 760 565 765ZM720 875L725 840 742 815 745 840 735 875 725 880Z"/>
<path fill="#2cbce4" d="M770 650L785 638 812 640 840 670 875 672 855 710 835 725 828 758 815 740 800 690ZM795 765L802 785 797 792 793 780Z"/>
<path fill="#ff2e2e" d="M812 630L850 585 880 578 950 570 970 590 972 615 950 640 945 685 915 715 905 750 885 735 860 705 875 672 840 670ZM965 655L995 635 1005 605 1010 620 1000 645 970 665ZM868 760L885 765 930 810 955 820 920 820 895 800ZM905 785L930 755 950 770 945 800 920 795ZM940 720L955 740 958 760 945 760ZM955 790L1000 785 1030 810 1050 825 1010 815ZM995 760L1025 770 1000 770ZM1060 755L1085 775 1097 805 1085 795ZM917 870L965 830 985 825 1000 835 1010 820 1037 880 1030 930 1000 925 960 905 922 915ZM1008 937L1023 937 1015 952ZM1070 965L1090 915 1108 925 1085 965ZM1062 850L1072 850 1072 868ZM1095 868L1125 868 1118 885 1112 872Z"/>
</g>

<!-- select panel -->
<rect class="pn" x="2228" y="658" width="379" height="754" rx="14"/>
<text x="2241" y="694" font-size="36" class="hd" textLength="101" lengthAdjust="spacingAndGlyphs">Select</text>
<rect x="2242" y="709" width="354" height="592" fill="#cedce4" stroke="#7d9bb0" stroke-width="3"/>
<rect x="2547" y="710" width="2.500" height="590" fill="#9cb7c8"/>
<rect x="2549" y="756" width="44" height="32" fill="#64809a"/>
<path d="M2562 766h16M2562 777h16" stroke="#e8eef2" stroke-width="2"/>
<path d="M2547 755h46M2547 1254h46" stroke="#9cb7c8" stroke-width="2"/>
<path fill="#5c7d97" d="M2561 739l8.500-12 8.500 12zM2561 1272h17l-8.500 13z"/>
<g clip-path="url(#lc)">
<rect class="cb" x="2250" y="718" width="33" height="31"/><rect class="cb" x="2250" y="764.600" width="33" height="31"/><rect class="cb" x="2250" y="811.300" width="33" height="31"/><rect class="cb" x="2250" y="857.900" width="33" height="31"/><rect class="cb" x="2250" y="904.600" width="33" height="31"/><rect class="cb" x="2250" y="951.200" width="33" height="31"/><rect class="cb" x="2250" y="997.900" width="33" height="31"/><rect class="cb" x="2250" y="1044.500" width="33" height="31"/><rect class="cb" x="2250" y="1091.200" width="33" height="31"/><rect class="cb" x="2250" y="1137.800" width="33" height="31"/><rect class="cb" x="2250" y="1184.500" width="33" height="31"/><rect class="cb" x="2250" y="1231.100" width="33" height="31"/><rect class="cb" x="2250" y="1277.800" width="33" height="31"/>
<text class="it" x="2296" y="743" textLength="152" lengthAdjust="spacingAndGlyphs">Afghanistan</text>
<text class="it" x="2296" y="789.700" textLength="96" lengthAdjust="spacingAndGlyphs">Albania</text>
<text class="it" x="2296" y="836.300" textLength="89" lengthAdjust="spacingAndGlyphs">Algeria</text>
<text class="it" x="2296" y="883" textLength="102" lengthAdjust="spacingAndGlyphs">Andorra</text>
<text class="it" x="2296" y="929.600" textLength="89" lengthAdjust="spacingAndGlyphs">Angola</text>
<text class="it" x="2296" y="976.300" textLength="247" lengthAdjust="spacingAndGlyphs">Antigua and Barb...</text>
<text class="it" x="2296" y="1022.900" textLength="123" lengthAdjust="spacingAndGlyphs">Argentina</text>
<text class="it" x="2296" y="1069.600" textLength="107" lengthAdjust="spacingAndGlyphs">Armenia</text>
<text class="it" x="2296" y="1116.200" textLength="76" lengthAdjust="spacingAndGlyphs">Aruba</text>
<text class="it" x="2296" y="1162.900" textLength="112" lengthAdjust="spacingAndGlyphs">Australia</text>
<text class="it" x="2296" y="1209.500" textLength="89" lengthAdjust="spacingAndGlyphs">Austria</text>
<text class="it" x="2296" y="1256.200" textLength="136" lengthAdjust="spacingAndGlyphs">Azerbaijan</text>
<text class="it" x="2296" y="1302.800" textLength="122" lengthAdjust="spacingAndGlyphs">Bahamas</text>
</g>
<rect x="2241" y="1312" width="354" height="48" rx="5" fill="#b5cad5" stroke="#c6d6df" stroke-width="2"/>
<rect x="2256" y="1324" width="22" height="21" fill="#c3d4de" stroke="#9fb6c4" stroke-width="3"/>
<text x="2286" y="1342" font-size="30" class="bd" style="fill:#8fa7b6" textLength="158" lengthAdjust="spacingAndGlyphs">Deselect all</text>
<rect x="2241" y="1369" width="355" height="29" fill="url(#pg)"/>

<!-- size panel -->
<rect class="pn" x="2228" y="1429" width="379" height="211" rx="14"/>
<text x="2241" y="1467" font-size="38" class="hd" textLength="68" lengthAdjust="spacingAndGlyphs">Size</text>
<text x="2439" y="1453" font-size="17" class="sm" textLength="125" lengthAdjust="spacingAndGlyphs">Various sources</text>
<use href="#tbl" x="2577" y="1445"/>
<rect class="box" x="2238" y="1477" width="359" height="49"/>
<text x="2245" y="1506" font-size="30" class="bd" textLength="226" lengthAdjust="spacingAndGlyphs">Population, total</text>
<path class="ar" d="M2564 1496h18l-9 11z"/>
<path d="M2247 1609C2250 1565 2280 1537 2318 1537S2388 1570 2390 1609Z" fill="#cedce4" stroke="#5a7088" stroke-width="1.400"/>
<path d="M2246 1609.500H2600" stroke="#666" stroke-width="1.400"/>
<text x="2385" y="1568" font-size="30" textLength="82" lengthAdjust="spacingAndGlyphs">1.36 B</text>
<text x="2255" y="1605" font-size="28">0</text>
<path d="M2241 1629l13-18 16 18z" fill="#dfe8ed" stroke="#1f2d40" stroke-width="2"/>
<path d="M2376 1629l13-18 16 18z" fill="#dfe8ed" stroke="#1f2d40" stroke-width="2"/>
</svg>
</body></html>
